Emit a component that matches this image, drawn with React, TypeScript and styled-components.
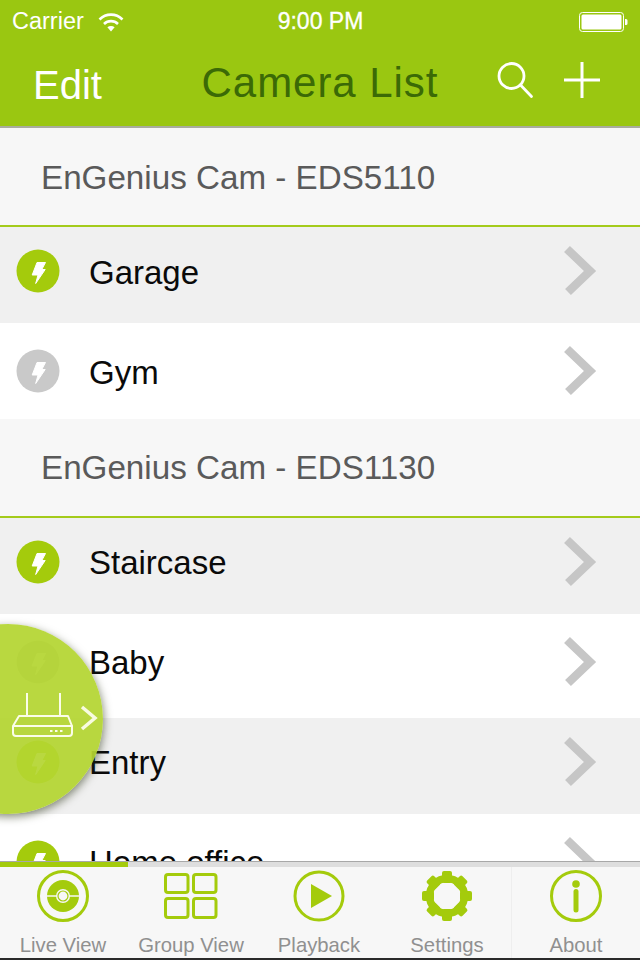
import React from "react";
import styled, { createGlobalStyle } from "styled-components";

const Global = createGlobalStyle`
  html, body { margin: 0; padding: 0; background: #fff; }
  body { font-family: "Liberation Sans", Arial, sans-serif; }
`;

const Screen = styled.div`
  position: relative;
  width: 640px;
  height: 960px;
  overflow: hidden;
  display: flex;
  flex-direction: column;
  background: #fff;
`;

const Header = styled.header`
  flex: none;
  height: 126px;
  background: #9ac711;
  border-bottom: 2px solid #a9ad9d;
  display: flex;
  flex-direction: column;
`;

const StatusBar = styled.div`
  height: 43px;
  padding: 0 12px;
  display: grid;
  grid-template-columns: 1fr auto 1fr;
  align-items: center;
  color: #fff;
  font-size: 23.5px;
`;

const StatusLeft = styled.div`
  display: flex;
  align-items: center;
  gap: 14px;
`;

const Time = styled.div`
  font-size: 23px;
  font-weight: 500;
  margin-left: 1px;
  -webkit-text-stroke: 0.3px #fff;
`;

const StatusRight = styled.div`
  display: flex;
  justify-content: flex-end;
`;

const NavBar = styled.div`
  position: relative;
  flex: 1;
  display: flex;
  align-items: center;
  justify-content: space-between;
  padding: 0 40px 0 33px;
`;

const EditLabel = styled.span`
  color: #fff;
  font-size: 40px;
  line-height: 46px;
  margin-top: 1px;
`;

const Title = styled.h1`
  position: absolute;
  left: 0;
  right: 0;
  top: 16px;
  margin: 0;
  text-align: center;
  color: #3b6a06;
  font-size: 42px;
  line-height: 48px;
  font-weight: 400;
  letter-spacing: 0.95px;
`;

const NavIcons = styled.div`
  display: flex;
  align-items: center;
  gap: 30px;
  margin-top: -9px;
`;

const List = styled.main`
  flex: 1;
  min-height: 0;
  overflow: hidden;
`;

const SectionHead = styled.div<{ $nudge: number }>`
  height: 95px;
  background: #f7f7f7;
  border-bottom: 2px solid #a4cb1b;
  display: flex;
  align-items: center;
  padding: ${(p) => 2 - p.$nudge}px 0 ${(p) => p.$nudge}px 41px;
  box-sizing: content-box;
  color: #5a5a5a;
  font-size: 33.2px;
  line-height: 40px;
`;

const Row = styled.div<{ $shaded: boolean; $last?: boolean }>`
  height: ${(p) => (p.$last ? 92 : 100)}px;
  background: #fff;
  ${(p) =>
    p.$shaded
      ? `background: linear-gradient(#f0f0f0 0, #f0f0f0 96px, #fff 96px);`
      : ""}
  display: flex;
  align-items: flex-start;
  padding: 22px 43px 0 16px;
  box-sizing: border-box;
`;

const Name = styled.span<{ $nudge: number }>`
  flex: 1;
  margin-left: 29px;
  margin-top: ${(p) => 3 - p.$nudge}px;
  color: #0a0a0a;
  font-size: 33px;
  line-height: 42px;
`;

const Chevron = styled.svg<{ $nudge: number }>`
  margin-top: -4px;
  filter: blur(0.5px);
`;

const Floater = styled.div`
  position: absolute;
  left: -87px;
  top: 624px;
  width: 190px;
  height: 190px;
  border-radius: 50%;
  background: rgba(180, 213, 50, 0.93);
  box-shadow: 1px 3px 8px rgba(40, 50, 20, 0.55);
  display: flex;
  align-items: center;
  justify-content: flex-end;
`;

const FloaterChevron = styled.svg`
  margin: 0 4px 2px 6px;
`;

const RouterIcon = styled.svg`
  margin-bottom: 7px;
`;

const TabBar = styled.nav`
  position: relative;
  flex: none;
  height: 99px;
  box-sizing: border-box;
  background: #f7f7f7;
  border-top: 1px solid #a8a8a8;
  border-bottom: 2px solid #2a2a2a;
  display: flex;
  flex-direction: column;
`;

const Progress = styled.div`
  flex: none;
  height: 5px;
  background: #dedede;
  display: flex;
`;

const ProgressFill = styled.div`
  background: #a4cb0c;
`;

const Tabs = styled.div`
  flex: 1;
  display: grid;
  grid-template-columns: repeat(5, 1fr);
`;

const Tab = styled.div<{ $divided?: boolean }>`
  display: flex;
  flex-direction: column;
  align-items: center;
  padding-top: 2px;
  border-left: ${(p) => (p.$divided ? "1px solid #eeeeee" : "none")};
  margin-left: ${(p) => (p.$divided ? "-1px" : "0")};
  transform: translateX(${(p) => (p.$divided ? "0" : "-1px")});
`;

const TabIcon = styled.svg`
  flex: none;
`;

const TabLabel = styled.span`
  margin-top: 10px;
  color: #909090;
  font-size: 20.3px;
  line-height: 24px;
`;

const GREEN = "#a4cb0c";

const Wifi = () => (
  <svg width="26" height="20" viewBox="0 0 26 20" fill="none" stroke="#fff" strokeWidth="2.6">
    <path d="M1.5 7.5C8 1 18 1 24.5 7.5" />
    <path d="M6 12C10 8.2 16 8.2 20 12" />
    <path d="M13 19.5l-3.6-4.3c2-1.6 5.2-1.6 7.2 0z" fill="#fff" stroke="none" />
  </svg>
);

const Battery = () => (
  <svg width="49" height="20" viewBox="0 0 49 20">
    <rect x="0.5" y="0.5" width="44" height="19" rx="3" fill="none" stroke="#fff" />
    <rect x="2.5" y="2.5" width="40" height="15" rx="1.5" fill="#fff" />
    <path d="M46 7h1a1.5 1.5 0 0 1 1.500 1.500v3A1.500 1.500 0 0 1 47 13h-1z" fill="#fff" />
  </svg>
);

const Search = () => (
  <svg width="38" height="38" viewBox="0 0 38 38" fill="none" stroke="#fff" strokeWidth="2.800">
    <circle cx="15.500" cy="15" r="12.500" />
    <path d="M24.500 24l11 11.500" strokeLinecap="round" />
  </svg>
);

const Plus = () => (
  <svg width="36" height="36" viewBox="0 0 36 36" fill="none" stroke="#fff" strokeWidth="3">
    <path d="M18 0v36M0 18h36" />
  </svg>
);

const StatusDot = ({ on }: { on: boolean }) => (
  <svg width="44" height="44" viewBox="-22 -22 44 44" style={{ flex: "none" }}>
    <circle r="21.500" fill={on ? GREEN : "#c9c9c9"} />
    <path
      d="M-1 -8.500L7.500 -8.500L3.800 -1.500L7.200 -1.500L-2.300 12.500L0 4L-5.800 4Z"
      fill="#fff"
      stroke="#fff"
      strokeWidth="1"
      strokeLinejoin="round"
    />
  </svg>
);

const RowChevron = () => (
  <Chevron $nudge={0} width="34" height="52" viewBox="0 0 34 52" fill="none" stroke="#c6c6c6" strokeWidth="8.500">
    <path d="M4 4L27 26L5 47" />
  </Chevron>
);

const Router = () => (
  <RouterIcon width="62" height="48" viewBox="0 0 62 48" fill="none" stroke="#fbfde9" strokeWidth="2">
    <path d="M15 1v22M48 1v22" />
    <path d="M7 24h49l4 10v7a3 3 0 0 1-3 3H4a3 3 0 0 1-3-3v-7z" strokeLinejoin="round" />
    <path d="M1.500 34h59" />
    <path d="M38 39h2.500M43 39h2.500M48 39h2.500" strokeWidth="2" />
  </RouterIcon>
);

const LiveIcon = () => (
  <TabIcon width="54" height="54" viewBox="-27 -27 54 54" fill="none">
    <circle r="24.500" stroke={GREEN} strokeWidth="3" />
    <circle r="16" fill={GREEN} />
    <path d="M-16 0H16" stroke="#f7f7f7" strokeWidth="1.500" />
    <circle r="7" fill="#f7f7f7" />
    <circle r="5" fill="none" stroke={GREEN} strokeWidth="1.200" />
  </TabIcon>
);

const GroupIcon = () => (
  <TabIcon width="54" height="54" viewBox="0 0 54 54" fill="none" stroke={GREEN} strokeWidth="3">
    <rect x="1.500" y="5.500" width="22.500" height="18" rx="2.500" />
    <rect x="29.500" y="5.500" width="22.500" height="18" rx="2.500" />
    <rect x="1.500" y="29.500" width="22.500" height="19" rx="2.500" />
    <rect x="29.500" y="29.500" width="22.500" height="19" rx="2.500" />
  </TabIcon>
);

const PlayIcon = () => (
  <TabIcon width="54" height="54" viewBox="-27 -27 54 54" fill="none">
    <circle r="24" stroke={GREEN} strokeWidth="3" />
    <path d="M-8 -12L13 0L-8 12Z" fill={GREEN} />
  </TabIcon>
);

const GearIcon = () => (
  <TabIcon width="54" height="54" viewBox="-27 -27 54 54" fill="none">
    {[0, 45, 90, 135, 180, 225, 270, 315].map((a) => (
      <rect key={a} x="-5" y="-25" width="10" height="12" rx="2" fill={GREEN} transform={`rotate(${a})`} />
    ))}
    <circle r="17.500" stroke={GREEN} strokeWidth="7.500" />
  </TabIcon>
);

const InfoIcon = () => (
  <TabIcon width="54" height="54" viewBox="-27 -27 54 54" fill="none">
    <circle r="24.500" stroke={GREEN} strokeWidth="3" />
    <circle cy="-12" r="3.800" fill={GREEN} />
    <path d="M0 -4.500V14" stroke={GREEN} strokeWidth="5" strokeLinecap="round" />
  </TabIcon>
);

type Cam = { name: string; on: boolean };

const sections: { title: string; nudge: number; cams: Cam[] }[] = [
  {
    title: "EnGenius Cam - EDS5110",
    nudge: 0,
    cams: [
      { name: "Garage", on: true },
      { name: "Gym", on: false },
    ],
  },
  {
    title: "EnGenius Cam - EDS1130",
    nudge: 1,
    cams: [
      { name: "Staircase", on: true },
      { name: "Baby", on: false },
      { name: "Entry", on: true },
      { name: "Home office", on: true },
    ],
  },
];

const tabs = [
  { label: "Live View", icon: <LiveIcon /> },
  { label: "Group View", icon: <GroupIcon /> },
  { label: "Playback", icon: <PlayIcon /> },
  { label: "Settings", icon: <GearIcon /> },
  { label: "About", icon: <InfoIcon />, divided: true },
];

export default function App() {
  return (
    <Screen>
      <Global />
      <Header>
        <StatusBar>
          <StatusLeft>
            <span>Carrier</span>
            <Wifi />
          </StatusLeft>
          <Time>9:00 PM</Time>
          <StatusRight>
            <Battery />
          </StatusRight>
        </StatusBar>
        <NavBar>
          <EditLabel>Edit</EditLabel>
          <Title>Camera List</Title>
          <NavIcons>
            <Search />
            <Plus />
          </NavIcons>
        </NavBar>
      </Header>
      <List>
        {sections.map((s) => (
          <section key={s.title}>
            <SectionHead $nudge={s.nudge}>{s.title}</SectionHead>
            {s.cams.map((c, i) => (
              <Row
                key={c.name}
                $shaded={i % 2 === 0}
                $last={s.cams.length === 2 && i === s.cams.length - 1}
              >
                <StatusDot on={c.on} />
                <Name $nudge={s.nudge}>{c.name}</Name>
                <RowChevron />
              </Row>
            ))}
          </section>
        ))}
      </List>
      <TabBar>
        <Progress>
          <ProgressFill style={{ width: `${(1 / 5) * 100}%` }} />
        </Progress>
        <Tabs>
          {tabs.map((t) => (
            <Tab key={t.label} $divided={t.divided}>
              {t.icon}
              <TabLabel>{t.label}</TabLabel>
            </Tab>
          ))}
        </Tabs>
      </TabBar>
      <Floater>
        <Router />
        <FloaterChevron width="19" height="26" viewBox="0 0 19 26" fill="none" stroke="#f8fbe0" strokeWidth="3.500">
          <path d="M2 2L15 13L2 24" />
        </FloaterChevron>
      </Floater>
    </Screen>
  );
}
